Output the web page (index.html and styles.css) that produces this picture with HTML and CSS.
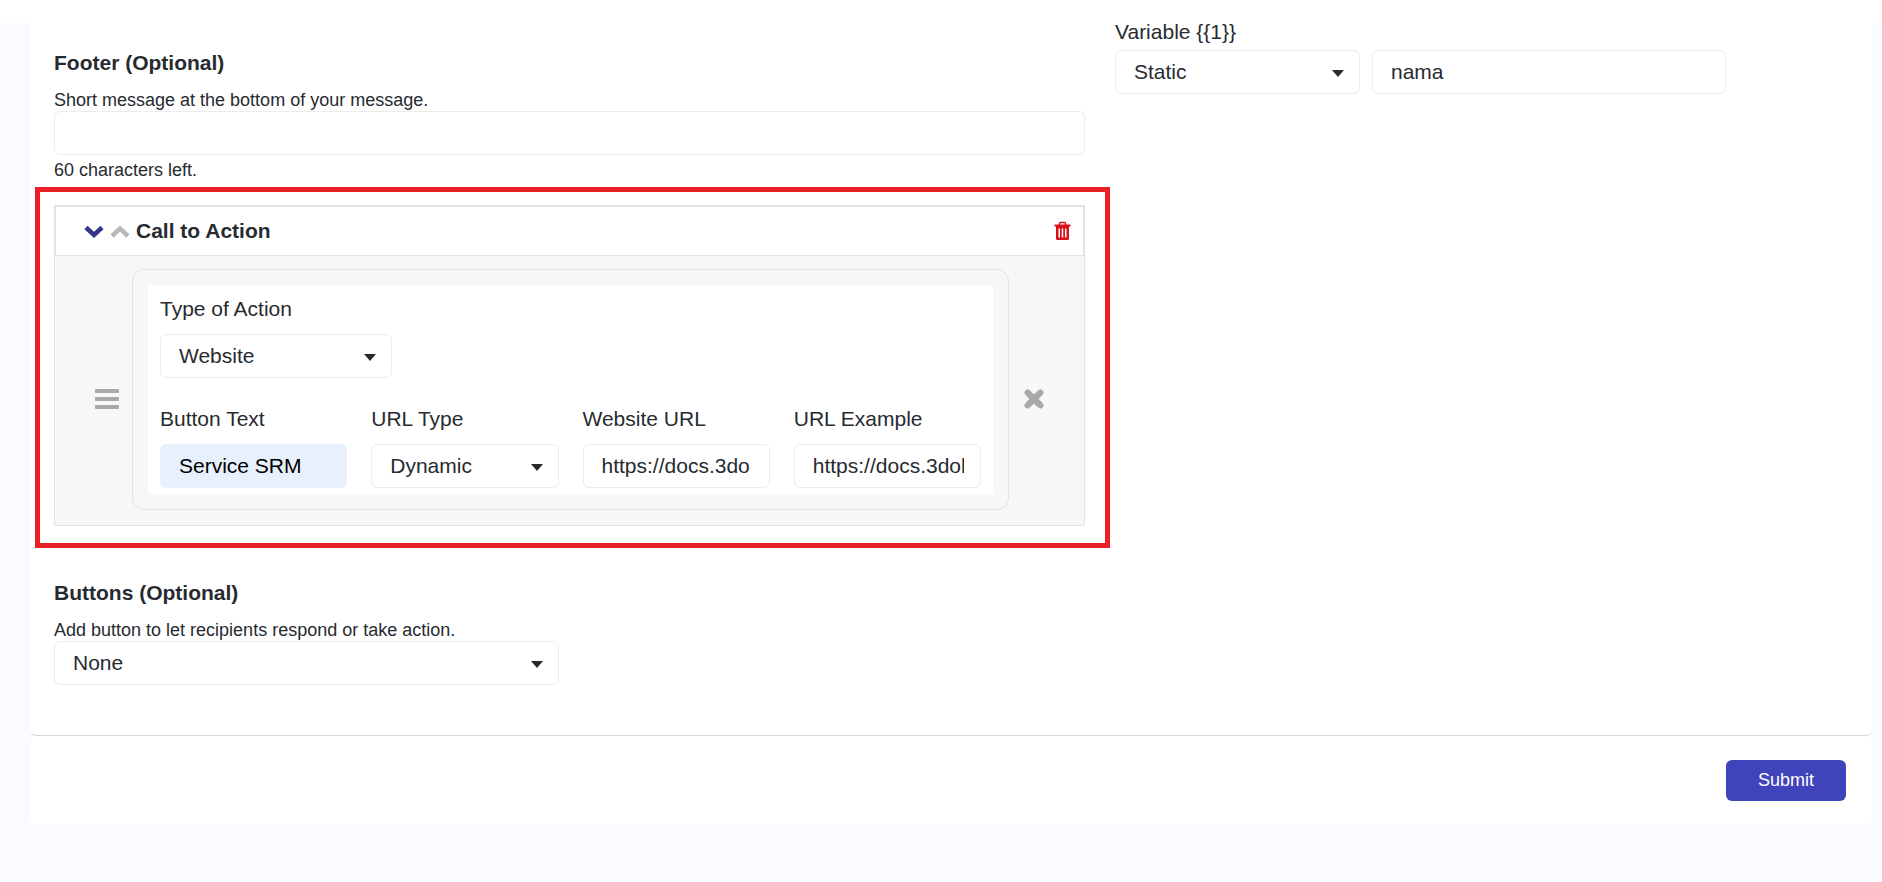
FILE: index.html
```html
<!DOCTYPE html>
<html lang="en">
<head>
  <meta charset="UTF-8" />
  <meta name="viewport" content="width=device-width, initial-scale=1.0"/>
  <title>Message Template</title>
  <link rel="stylesheet" href="styles.css">
</head>
<body>
  <header class="topbar"></header>

  <form class="page">
    <div class="card template">
      <div class="left">
        <section>
          <h2>Footer (Optional)</h2>
          <label class="hint" for="footer">Short message at the bottom of your message.</label>
          <input class="field" type="text" id="footer" maxlength="60" />
          <p class="hint counter">60 characters left.</p>
        </section>

        <section class="cta">
          <div class="cta-head">
            <button type="button" class="icon-btn" aria-label="Move down">
              <svg width="20" height="16" viewBox="0 0 20 16"><path d="M2 4.500l8 7.500 8-7.500" fill="none" stroke="#35358c" stroke-width="4.500"/></svg>
            </button>
            <button type="button" class="icon-btn" aria-label="Move up">
              <svg width="20" height="16" viewBox="0 0 20 16"><path d="M2 13l8-7.500 8 7.500" fill="none" stroke="#b9b9b9" stroke-width="4.500"/></svg>
            </button>
            <h2>Call to Action</h2>
            <button type="button" class="icon-btn delete" aria-label="Delete">
              <svg width="17" height="20" viewBox="0 0 17 20"><path d="M5.500 4V2.500q0-1 1-1h4q1 0 1 1V4" fill="none" stroke="#d81118" stroke-width="1.500"/><path d="M.5 3.500h16v2h-16z" fill="#d81118"/><path fill-rule="evenodd" d="M2 5h13v12.500q0 1.500-1.500 1.500h-10Q2 19 2 17.500zM4.500 7.500v9H6v-9zM7.750 7.500v9h1.500v-9zM11 7.500v9h1.500v-9z" fill="#d81118"/></svg>
            </button>
          </div>

          <div class="cta-body">
            <button type="button" class="icon-btn side" aria-label="Drag">
              <svg width="24" height="20" viewBox="0 0 24 20" fill="#a9a9a9"><rect width="24" height="4" rx="1"/><rect y="8" width="24" height="4" rx="1"/><rect y="16" width="24" height="4" rx="1"/></svg>
            </button>
            <div class="panel">
              <div class="action">
                <div class="group type">
                  <label for="actionType">Type of Action</label>
                  <select class="field" id="actionType"><option>Website</option><option>Phone</option></select>
                </div>
                <div class="group">
                  <label for="buttonText">Button Text</label>
                  <input class="field filled" type="text" id="buttonText" value="Service SRM" />
                </div>
                <div class="group">
                  <label for="urlType">URL Type</label>
                  <select class="field" id="urlType"><option>Dynamic</option><option>Static</option></select>
                </div>
                <div class="group">
                  <label for="websiteUrl">Website URL</label>
                  <input class="field" type="text" id="websiteUrl" value="https://docs.3do" />
                </div>
                <div class="group">
                  <label for="urlExample">URL Example</label>
                  <input class="field" type="text" id="urlExample" value="https://docs.3dolphins" />
                </div>
              </div>
            </div>
            <button type="button" class="icon-btn side" aria-label="Remove action">
              <svg width="20" height="20" viewBox="0 0 20 20"><path d="M4 4l12 12M16 4L4 16" fill="none" stroke="#a9a9a9" stroke-width="6.500"/><path d="M3.500 3.500l13 13M16.500 3.500l-13 13" fill="none" stroke="#a9a9a9" stroke-width="6" stroke-linecap="round"/></svg>
            </button>
          </div>
        </section>

        <section class="buttons">
          <h2>Buttons (Optional)</h2>
          <label class="hint" for="buttons">Add button to let recipients respond or take action.</label>
          <select class="field half" id="buttons"><option>None</option><option>Call to Action</option></select>
        </section>
      </div>

      <div class="right">
        <label for="variable">Variable {{1}}</label>
        <div class="variable">
          <select class="field" id="variable"><option>Static</option><option>Dynamic</option></select>
          <input class="field" type="text" value="nama" aria-label="Variable value" />
        </div>
      </div>
    </div>

    <div class="card actions">
      <button type="submit" class="submit">Submit</button>
    </div>
  </form>
</body>
</html>
```
FILE: styles.css
```css
* {
  box-sizing: border-box;
}
body {
  font-family: "Liberation Sans", Arial, sans-serif;
  font-size: 21px;
  line-height: 24px;
  background-color: #fafbff;
  color: #272b30;
  margin: 0;
}
h2 {
  margin: 0;
  font-size: 21px;
  line-height: 24px;
}
label {
  display: block;
}
.topbar {
  height: 23px;
  background-color: #fff;
}
.page {
  padding: 0 10px 0 30px;
}
.card {
  background-color: #fff;
  border-radius: 6px;
}
.template {
  display: grid;
  grid-template-columns: 1031fr 733fr;
  gap: 30px;
  padding: 0 24px 50px;
  border-top-left-radius: 0;
  border-top-right-radius: 0;
  border-bottom: 1px solid #d9d9d9;
}
.left {
  padding-top: 28px;
}
.hint {
  margin: 14px 0 0;
  font-size: 18px;
  line-height: 22px;
}
.counter {
  margin-top: 4px;
}

/* form fields */
.field {
  display: block;
  width: 100%;
  height: 44px;
  padding: 0 16px 0 18px;
  border: 1px solid #ececec;
  border-radius: 6px;
  background-color: #fff;
  color: #272b30;
  font-family: inherit;
  font-size: 21px;
}
select.field {
  appearance: none;
  padding-bottom: 2px;
  background-image: url("data:image/svg+xml,%3Csvg xmlns='http://www.w3.org/2000/svg' viewBox='0 0 12 7'%3E%3Cpath d='M0 0h12L6 7z' fill='%23272b30'/%3E%3C/svg%3E");
  background-repeat: no-repeat;
  background-position: right 15px top 19px;
  background-size: 12px 7px;
}
.filled {
  background-color: #e8f0fe;
  border-color: #e8f0fe;
  color: #000;
}
.half {
  width: 49%;
}
.icon-btn {
  display: flex;
  align-items: center;
  justify-content: center;
  padding: 0;
  border: 0;
  background: none;
}

/* call to action */
.cta {
  position: relative;
  margin-top: 24px;
}
.cta::after {
  content: "";
  position: absolute;
  inset: -18px -25px -22px -19px;
  border: 5px solid #ea1f27;
  pointer-events: none;
}
.cta-head {
  display: flex;
  align-items: center;
  gap: 6px;
  height: 51px;
  padding: 0 12px 0 28px;
  border: 2px solid #e3e3e3;
  border-bottom-width: 1px;
}
.delete {
  margin-left: auto;
}
.cta-body {
  display: grid;
  grid-template-columns: 50px 1fr 49px;
  padding: 13px 26px 15px 27px;
  border: 1px solid #e3e3e3;
  border-top: 0;
  background-color: #f7f7f7;
}
.side {
  padding-top: 18px;
}
.panel {
  padding: 15px;
  border: 1px solid #e3e3e3;
  border-radius: 12px;
}
.action {
  display: grid;
  grid-template-columns: repeat(4, minmax(0, 1fr));
  gap: 29px 24px;
  padding: 12px 12px 6px;
  background-color: #fff;
}
.group label {
  margin-bottom: 13px;
}
.type {
  grid-column: 1 / -1;
}
.type .field {
  width: 232px;
}

.buttons {
  margin-top: 55px;
}
.right label {
  line-height: 18px;
}
.variable {
  display: grid;
  grid-template-columns: 245fr 354fr 110fr;
  gap: 12px;
  margin-top: 9px;
}

/* bottom bar */
.actions {
  display: flex;
  justify-content: flex-end;
  padding: 24px 26px;
}
.submit {
  min-width: 120px;
  height: 41px;
  border: 0;
  border-radius: 6px;
  background-color: #4044bb;
  color: #fff;
  font-family: inherit;
  font-size: 18px;
}
```
